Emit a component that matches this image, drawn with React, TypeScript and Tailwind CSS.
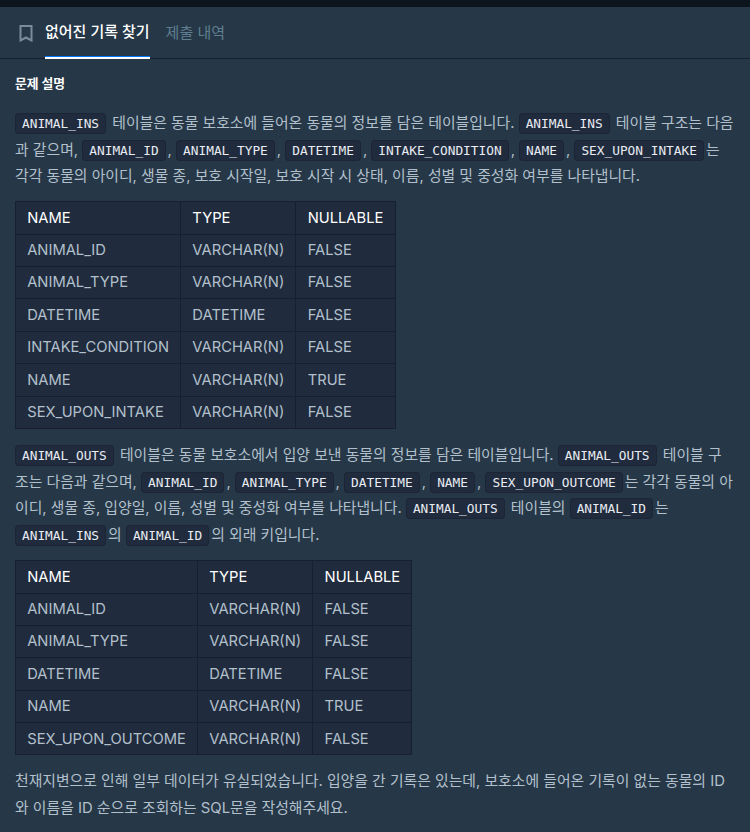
import React from "react";

const C = ({ children }: { children: React.ReactNode }) => (
  <code className="mr-[2px] rounded-[4px] border border-[#1b2535] bg-[#202b3d] px-[6px] py-[2px] font-['DejaVu_Sans_Mono',monospace] text-[12.8px] leading-none text-[#e9ecf3]">
    {children}
  </code>
);

const Table = ({ rows }: { rows: string[][] }) => (
  <table className="border-collapse bg-[#202b3d] text-[14.72px] text-[#b2c0cc]">
    <thead>
      <tr className="text-white">
        <th className="h-[32.4px] border border-[#172030] px-[11.2px] text-left font-normal">NAME</th>
        <th className="h-[32.4px] border border-[#172030] px-[11.2px] text-left font-normal">TYPE</th>
        <th className="h-[32.4px] border border-[#172030] px-[11.2px] text-left font-normal">NULLABLE</th>
      </tr>
    </thead>
    <tbody>
      {rows.map((r) => (
        <tr key={r[0]}>
          {r.map((c, i) => (
            <td key={i} className="h-[32.4px] border border-[#172030] px-[11.2px]">{c}</td>
          ))}
        </tr>
      ))}
    </tbody>
  </table>
);

export default function App() {
  return (
    <div className="h-[832px] w-[750px] overflow-hidden bg-[#263747] font-['Inter','Noto_Sans_CJK_KR',sans-serif] text-[#b2c0cc]">
      <div className="h-[7px] bg-[#0c151c]" />
      <div className="flex h-[52px] items-stretch border-b border-[#172030] pl-[19px]">
        <svg width="14" height="17" viewBox="0 0 14 17" fill="none" className="mt-[18px] text-[#7a8b9c]" stroke="currentColor" strokeWidth="2">
          <path d="M1.5 1h11v14.5L7 12.5l-5.5 3z" />
        </svg>
        <div className="ml-[12px] flex h-[52px] flex-col text-[15px] font-medium text-white">
          <div className="flex flex-1 items-center pt-[2px]">없어진 기록 찾기</div>
          <div className="h-[1px] bg-[#0078ff]" />
          <div className="h-[2px] bg-white" />
        </div>
        <div className="ml-[16px] flex h-[52px] items-center text-[15px] text-[#5f7f90]">제출 내역</div>
      </div>
      <div className="px-[15px] pt-[15px] text-[14.85px] leading-[26.5px]">
        <div className="mb-[16.3px] text-[12.8px] font-bold leading-[20px] text-white">문제 설명</div>
        <p className="mb-[11.4px]">
          <C>ANIMAL_INS</C> 테이블은 동물 보호소에 들어온 동물의 정보를 담은 테이블입니다. <C>ANIMAL_INS</C> 테이블 구조는 다음과 같으며, <C>ANIMAL_ID</C>, <C>ANIMAL_TYPE</C>, <C>DATETIME</C>, <C>INTAKE_CONDITION</C>, <C>NAME</C>, <C>SEX_UPON_INTAKE</C>는 각각 동물의 아이디, 생물 종, 보호 시작일, 보호 시작 시 상태, 이름, 성별 및 중성화 여부를 나타냅니다.
        </p>
        <Table
          rows={[
            ["ANIMAL_ID", "VARCHAR(N)", "FALSE"],
            ["ANIMAL_TYPE", "VARCHAR(N)", "FALSE"],
            ["DATETIME", "DATETIME", "FALSE"],
            ["INTAKE_CONDITION", "VARCHAR(N)", "FALSE"],
            ["NAME", "VARCHAR(N)", "TRUE"],
            ["SEX_UPON_INTAKE", "VARCHAR(N)", "FALSE"],
          ]}
        />
        <p className="mb-[11.8px] mt-[13.4px]">
          <C>ANIMAL_OUTS</C> 테이블은 동물 보호소에서 입양 보낸 동물의 정보를 담은 테이블입니다. <C>ANIMAL_OUTS</C> 테이블 구조는 다음과 같으며, <C>ANIMAL_ID</C>, <C>ANIMAL_TYPE</C>, <C>DATETIME</C>, <C>NAME</C>, <C>SEX_UPON_OUTCOME</C>는 각각 동물의 아이디, 생물 종, 입양일, 이름, 성별 및 중성화 여부를 나타냅니다. <C>ANIMAL_OUTS</C> 테이블의 <C>ANIMAL_ID</C>는 <C>ANIMAL_INS</C>의 <C>ANIMAL_ID</C>의 외래 키입니다.
        </p>
        <Table
          rows={[
            ["ANIMAL_ID", "VARCHAR(N)", "FALSE"],
            ["ANIMAL_TYPE", "VARCHAR(N)", "FALSE"],
            ["DATETIME", "DATETIME", "FALSE"],
            ["NAME", "VARCHAR(N)", "TRUE"],
            ["SEX_UPON_OUTCOME", "VARCHAR(N)", "FALSE"],
          ]}
        />
        <p className="mt-[13px]">
          천재지변으로 인해 일부 데이터가 유실되었습니다. 입양을 간 기록은 있는데, 보호소에 들어온 기록이 없는 동물의 ID와 이름을 ID 순으로 조회하는 SQL문을 작성해주세요.
        </p>
      </div>
    </div>
  );
}
